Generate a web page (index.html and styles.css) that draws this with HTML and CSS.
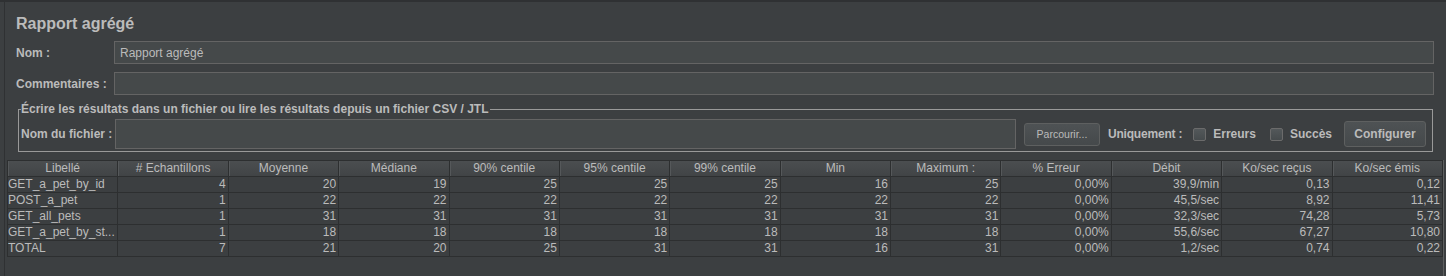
FILE: index.html
```html
<!DOCTYPE html>
<html lang="fr">
<head>
  <meta charset="UTF-8" />
  <title>Rapport agrégé</title>
  <link rel="stylesheet" href="styles.css">
</head>
<body>
  <div class="frame">
    <h1 class="title">Rapport agrégé</h1>

    <div class="form-row">
      <label for="name">Nom :</label>
      <input type="text" id="name" value="Rapport agrégé" />
    </div>
    <div class="form-row">
      <label for="comments">Commentaires :</label>
      <input type="text" id="comments" />
    </div>

    <fieldset class="file-box">
      <legend>Écrire les résultats dans un fichier ou lire les résultats depuis un fichier CSV / JTL</legend>
      <div class="file-row">
        <label for="filename" class="file-label">Nom du fichier :</label>
        <input type="text" id="filename" class="file-input" />
        <button class="browse">Parcourir...</button>
        <span class="only">Uniquement :</span>
        <label class="check"><span class="box"></span>Erreurs</label>
        <label class="check check-last"><span class="box"></span>Succès</label>
        <button class="configure">Configurer</button>
      </div>
    </fieldset>

    <div class="table-pane">
      <table class="report">
        <thead>
          <tr>
            <th>Libellé</th>
            <th># Echantillons</th>
            <th>Moyenne</th>
            <th>Médiane</th>
            <th>90% centile</th>
            <th>95% centile</th>
            <th>99% centile</th>
            <th>Min</th>
            <th>Maximum :</th>
            <th>% Erreur</th>
            <th>Débit</th>
            <th>Ko/sec reçus</th>
            <th>Ko/sec émis</th>
          </tr>
        </thead>
        <tbody>
          <tr>
            <td>GET_a_pet_by_id</td><td>4</td><td>20</td><td>19</td><td>25</td><td>25</td><td>25</td><td>16</td><td>25</td><td>0,00%</td><td>39,9/min</td><td>0,13</td><td>0,12</td>
          </tr>
          <tr>
            <td>POST_a_pet</td><td>1</td><td>22</td><td>22</td><td>22</td><td>22</td><td>22</td><td>22</td><td>22</td><td>0,00%</td><td>45,5/sec</td><td>8,92</td><td>11,41</td>
          </tr>
          <tr>
            <td>GET_all_pets</td><td>1</td><td>31</td><td>31</td><td>31</td><td>31</td><td>31</td><td>31</td><td>31</td><td>0,00%</td><td>32,3/sec</td><td>74,28</td><td>5,73</td>
          </tr>
          <tr>
            <td>GET_a_pet_by_st...</td><td>1</td><td>18</td><td>18</td><td>18</td><td>18</td><td>18</td><td>18</td><td>18</td><td>0,00%</td><td>55,6/sec</td><td>67,27</td><td>10,80</td>
          </tr>
          <tr>
            <td>TOTAL</td><td>7</td><td>21</td><td>20</td><td>25</td><td>31</td><td>31</td><td>16</td><td>31</td><td>0,00%</td><td>1,2/sec</td><td>0,74</td><td>0,22</td>
          </tr>
        </tbody>
      </table>
    </div>
  </div>
</body>
</html>
```

FILE: styles.css
```css
html, body {
  margin: 0;
  height: 100%;
}
body {
  background-color: #3c3f41;
  color: #bbbbbb;
  font-family: "Liberation Sans", Arial, sans-serif;
  font-size: 12px;
  border-top: 2px solid #2f3133;
  box-sizing: border-box;
  overflow: hidden;
}
.frame {
  margin-left: 4px;
  border-left: 1px solid #2f3133;
  height: 100%;
  display: flex;
  flex-direction: column;
}
.title {
  margin: 0;
  padding: 13px 0 0 11px;
  font-size: 16px;
  line-height: 18px;
  font-weight: bold;
}
.form-row {
  display: grid;
  grid-template-columns: 98px 1fr;
  align-items: center;
  margin: 8px 12px 0 11px;
}
.form-row label, .file-label, .only, .check, legend {
  font-weight: bold;
}
input[type="text"] {
  height: 23px;
  box-sizing: border-box;
  border: 1px solid #646464;
  background-color: #45494a;
  color: #bbbbbb;
  font-family: inherit;
  font-size: 12px;
  padding: 0 5px;
  outline: none;
  margin: 0;
}
.file-box {
  margin: 7px 13px 0 13px;
  padding: 3px 6px 2px 2px;
  border: 1px solid #999999;
  min-width: 0;
}
.file-box legend {
  padding: 0 2px 0 0;
  font-size: 12px;
  line-height: 14px;
}
.file-row {
  display: flex;
  align-items: center;
  height: 30px;
}
.file-label {
  width: 94px;
  flex: none;
}
.file-row .file-input {
  flex: 1;
  height: 30px;
  min-width: 0;
}
button {
  background: linear-gradient(#4e5254, #45494b);
  border: 1px solid #5e6060;
  border-radius: 3px;
  color: #bbbbbb;
  font-family: inherit;
  padding: 0;
  flex: none;
}
.browse {
  margin-left: 8px;
  width: 76px;
  height: 23px;
  font-size: 10.5px;
}
.only {
  margin-left: 8px;
  letter-spacing: -0.2px;
  flex: none;
}
.check {
  display: flex;
  align-items: center;
  gap: 7px;
  margin-left: 11px;
  flex: none;
}
.check-last {
  margin-left: 14px;
}
.box {
  width: 13px;
  height: 13px;
  box-sizing: border-box;
  border: 1px solid #6b6b6b;
  border-radius: 2px;
  background: linear-gradient(#53585a, #464b4d);
}
.configure {
  margin-left: 12px;
  width: 82px;
  height: 26px;
  font-size: 12px;
  font-weight: bold;
}
.table-pane {
  flex: 1;
  margin: 8px 2px 0 2px;
  border-right: 1px solid #5e6060;
}
.report {
  width: 100%;
  table-layout: fixed;
  border-collapse: separate;
  border-spacing: 0;
  border-top: 1px solid #2d2f30;
  border-left: 1px solid #2d2f30;
}
.report th, .report td {
  height: 15px;
  line-height: 15px;
  padding: 0 2px 0 0;
  border-right: 1px solid #2d2f30;
  border-bottom: 1px solid #2d2f30;
  white-space: nowrap;
  overflow: hidden;
  font-size: 12px;
  text-align: right;
}
.report th {
  font-weight: normal;
  text-align: center;
  padding: 0;
  background: linear-gradient(#4b4e50, #414446);
  box-shadow: inset 1px 0 #55585a;
}
.report td:first-child {
  text-align: left;
  padding-left: 0;
}
```
